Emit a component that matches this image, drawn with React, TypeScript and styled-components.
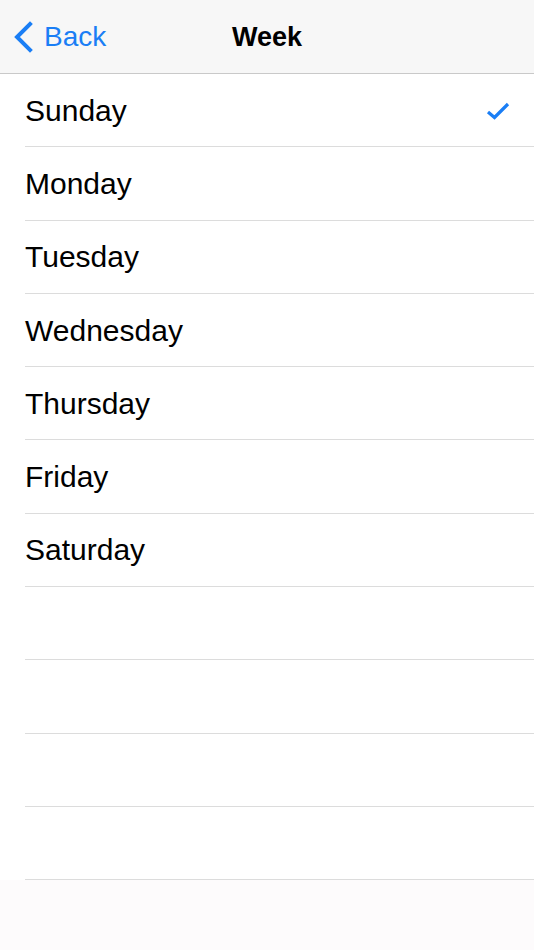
import React from "react";
import styled, { createGlobalStyle } from "styled-components";

const Global = createGlobalStyle`
  html, body { margin: 0; padding: 0; background: #fdfbfc; }
  body { font-family: "Liberation Sans", Arial, sans-serif; }
`;

const Screen = styled.div`
  width: 534px;
  height: 950px;
  display: flex;
  flex-direction: column;
  background: #fdfbfc;
  overflow: hidden;
`;

const NavBar = styled.header`
  height: 74px;
  box-sizing: border-box;
  background: #f7f7f7;
  border-bottom: 1px solid #c9c9c9;
  display: grid;
  grid-template-columns: 1fr auto 1fr;
  align-items: center;
`;

const BackButton = styled.button`
  justify-self: start;
  display: flex;
  align-items: center;
  gap: 10px;
  background: none;
  border: none;
  padding: 0 0 0 12px;
  margin-top: 1px;
  color: #1a7ef5;
  font-family: "Liberation Sans", Arial, sans-serif;
  font-size: 28px;
  cursor: pointer;
`;

const Title = styled.h1`
  margin: 1px 0 0 0;
  font-size: 27px;
  font-weight: bold;
  color: #000;
`;

const List = styled.ul`
  list-style: none;
  margin: 0;
  padding: 0;
  background: #fff;
`;

const Row = styled.li`
  height: 73.3px;
  box-sizing: border-box;
  margin-left: 25px;
  padding-right: 24px;
  padding-top: 1px;
  border-bottom: 1px solid #dcdcdc;
  display: flex;
  align-items: center;
  justify-content: space-between;
  font-size: 30px;
  color: #000;
`;

const Check = styled.svg`
  width: 24px;
  height: 18px;
`;

const days = ["Sunday", "Monday", "Tuesday", "Wednesday", "Thursday", "Friday", "Saturday", "", "", "", ""];

export default function App() {
  return (
    <Screen>
      <Global />
      <NavBar>
        <BackButton>
          <svg width="22" height="32" viewBox="0 0 22 32">
            <path d="M18 3 L5 16 L18 29" fill="none" stroke="#1a7ef5" strokeWidth="4" strokeLinecap="square" />
          </svg>
          Back
        </BackButton>
        <Title>Week</Title>
        <div />
      </NavBar>
      <List>
        {days.map((d, i) => (
          <Row key={i}>
            <span>{d}</span>
            {i === 0 && (
              <Check viewBox="0 0 24 18">
                <path d="M2 10 L8.5 15.5 L22 2" fill="none" stroke="#1a7ef5" strokeWidth="3.2" />
              </Check>
            )}
          </Row>
        ))}
      </List>
    </Screen>
  );
}
